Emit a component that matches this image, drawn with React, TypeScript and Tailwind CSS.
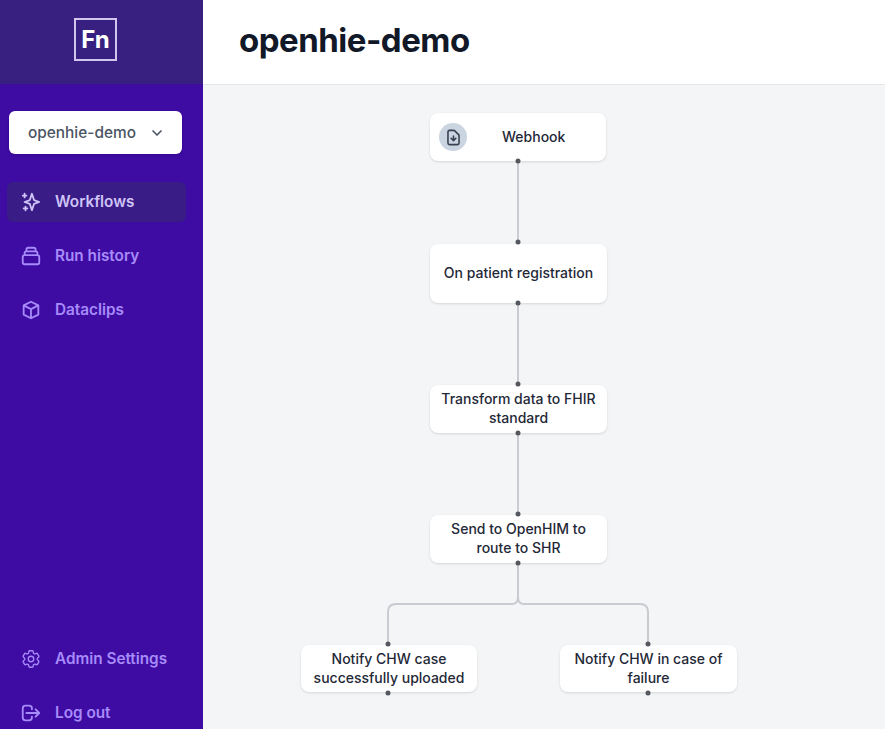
import { ChevronDown } from "lucide-react";
import {
  HiOutlineSparkles,
  HiOutlineCollection,
  HiOutlineCube,
  HiOutlineLogout,
  HiOutlineDocumentDownload,
} from "react-icons/hi";
import { HiOutlineCog6Tooth } from "react-icons/hi2";

const nodes = [
  { label: "On patient registration", cls: "left-[227px] top-[159px] w-[177px] h-[59px]" },
  { label: "Transform data to FHIR standard", cls: "left-[227px] top-[300px] w-[177px] h-[48px]" },
  { label: "Send to OpenHIM to route to SHR", cls: "left-[227px] top-[430px] w-[177px] h-[48px]" },
  { label: "Notify CHW case successfully uploaded", cls: "left-[98px] top-[560px] w-[176px] h-[47px]" },
  { label: "Notify CHW in case of failure", cls: "left-[357px] top-[560px] w-[177px] h-[47px]" },
];

const dots = [
  [315, 76], [315, 157], [315, 218], [315, 299], [315, 348],
  [315, 429], [315, 478], [185, 559], [445, 559], [185, 608], [445, 608],
];

function NavItem({ icon, label, active }: { icon: React.ReactNode; label: string; active?: boolean }) {
  return (
    <div
      className={
        "flex items-center h-[40px] w-[179px] ml-[7px] pl-[13px] gap-[13px] rounded-md text-[15.3px] font-semibold " +
        (active ? "bg-[#391c86] text-[#cfc4f7]" : "text-[#a78bfa]")
      }
    >
      <span className="text-[22px] shrink-0">{icon}</span>
      <span>{label}</span>
    </div>
  );
}

export default function App() {
  return (
    <div className="flex h-[729px] w-[885px] overflow-hidden font-['Inter',sans-serif] bg-[#f3f5f7]">
      <aside className="w-[203px] shrink-0 bg-[#3e0ba3] flex flex-col">
        <div className="h-[84px] bg-[#37207f] pt-[18px] pl-[74px]">
          <div className="w-[43px] h-[43px] border-2 border-[#cfc8ec] flex items-center justify-center text-white text-[24px] font-bold">
            Fn
          </div>
        </div>
        <div className="ml-[9px] w-[173px] mt-[27px] h-[43px] bg-white rounded-md shadow-sm flex items-center pl-[19px] gap-[13px] text-[15.4px] font-medium text-[#4b5563]">
          openhie-demo
          <ChevronDown size={16} strokeWidth={2.5} />
        </div>
        <nav className="mt-[28px] flex flex-col gap-[14px]">
          <NavItem active icon={<HiOutlineSparkles />} label="Workflows" />
          <NavItem icon={<HiOutlineCollection />} label="Run history" />
          <NavItem icon={<HiOutlineCube />} label="Dataclips" />
        </nav>
        <div className="mt-auto flex flex-col gap-[14px] mb-[-4px]">
          <NavItem icon={<HiOutlineCog6Tooth />} label="Admin Settings" />
          <NavItem icon={<HiOutlineLogout />} label="Log out" />
        </div>
      </aside>

      <main className="flex-1 flex flex-col min-w-0">
        <header className="h-[85px] shrink-0 bg-white border-b border-[#e5e7eb] flex items-center pl-[36px] pb-[3px]">
          <h1 className="text-[33px] font-bold text-[#111827] tracking-[-0.5px]">openhie-demo</h1>
        </header>

        <div className="relative flex-1">
          <div className="absolute left-[227px] top-[28px] w-[176px] h-[48px] bg-white rounded-lg shadow-sm flex items-center pl-[9px]">
            <span className="w-[28px] h-[28px] rounded-full bg-[#cbd5e1] flex items-center justify-center text-[#374151] text-[19px]">
              <HiOutlineDocumentDownload />
            </span>
            <span className="ml-[35px] pb-[1px] text-[14px] font-[450] text-[#1f2937]">Webhook</span>
          </div>

          {nodes.map((n) => (
            <div
              key={n.label}
              className={
                "absolute bg-white rounded-lg shadow-sm flex items-center justify-center text-center px-2 pb-[2px] text-[14px] leading-[19px] font-[450] text-[#1f2937] " +
                n.cls
              }
            >
              {n.label}
            </div>
          ))}

          <svg className="absolute inset-0 w-full h-full pointer-events-none" fill="none">
            <g stroke="#c9cbd0" strokeWidth="2">
              <path d="M315 76V157" />
              <path d="M315 218V299" />
              <path d="M315 348V429" />
              <path d="M315 478V512C315 517 313 519 309 519H193C188 519 185 522 185 527V559" />
              <path d="M315 512C315 517 317 519 321 519H437C442 519 445 522 445 527V559" />
            </g>
            {dots.map(([x, y]) => (
              <circle key={`${x}-${y}`} cx={x} cy={y} r="2.5" fill="#55585f" />
            ))}
          </svg>
        </div>
      </main>
    </div>
  );
}
